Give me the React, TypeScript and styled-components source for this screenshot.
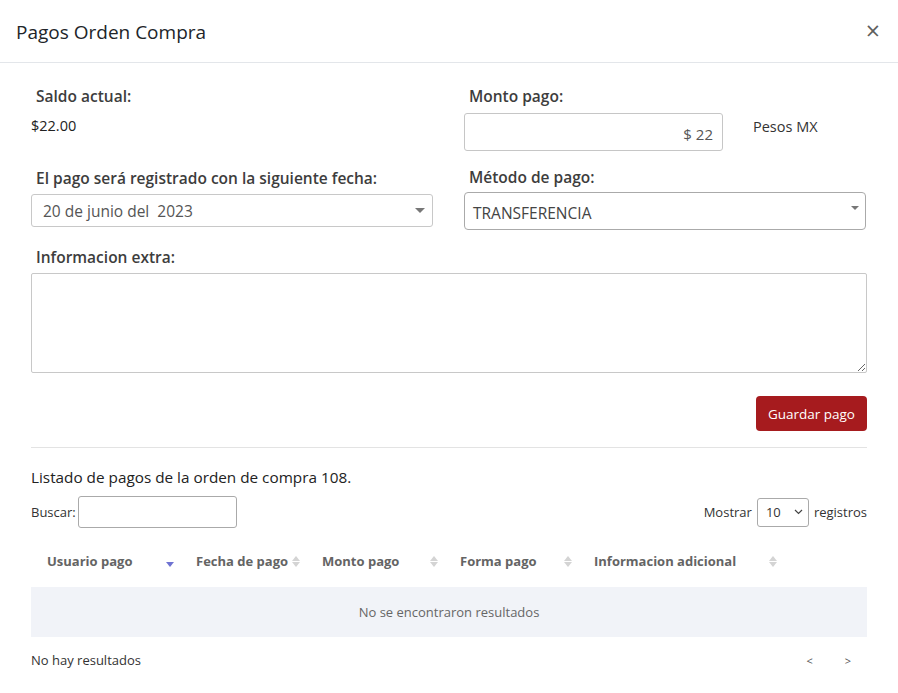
import type { FC } from "react";
import styled, { createGlobalStyle } from "styled-components";

const GlobalStyle = createGlobalStyle`
  html, body {
    margin: 0;
    padding: 0;
    background: #ffffff;
  }

  body {
    font-family: "Open Sans", "Liberation Sans", sans-serif;
    color: #212529;
  }

  * {
    box-sizing: border-box;
  }
`;

const Modal = styled.div`
  width: 898px;
  height: 693px;
  background: #fff;
  overflow: hidden;
`;

const Header = styled.div`
  height: 63px;
  display: flex;
  align-items: center;
  justify-content: space-between;
  padding: 0 16px;
  border-bottom: 1px solid #e3e6ea;
`;

const Title = styled.h5`
  margin: 0;
  font-size: 19px;
  font-weight: 400;
  color: #212529;
  padding-top: 1px;
`;

const Close = styled.span`
  font-size: 25px;
  line-height: 1;
  color: #5f5f5f;
  margin-right: 2px;
  margin-top: -1px;
`;

const Body = styled.div`
  padding: 23px 31px 0 31px;
`;

const FormGrid = styled.div`
  display: grid;
  grid-template-columns: 402px 402px;
  column-gap: 31px;
`;

const Field = styled.div`
  display: flex;
  flex-direction: column;
`;

const Label = styled.label<{ $top?: number }>`
  font-size: 15.5px;
  font-weight: 600;
  color: #3d3d3d;
  padding-left: 5px;
  margin-top: ${({ $top }) => $top ?? 0}px;
  margin-bottom: 6px;
  height: 20px;
  line-height: 20px;
  white-space: nowrap;
`;

const Value = styled.div`
  font-size: 14.5px;
  color: #222;
  margin-top: 4px;
`;

const AmountRow = styled.div`
  display: flex;
  align-items: flex-start;
  gap: 30px;
  margin-top: 1px;
`;

const AmountInput = styled.div`
  width: 259px;
  height: 38px;
  border: 1px solid #c6c6c6;
  border-radius: 3px;
  display: flex;
  align-items: center;
  justify-content: flex-end;
  padding: 3px 9px 0 0;
  font-size: 15px;
  color: #555;
`;

const Unit = styled.span`
  font-size: 14.5px;
  color: #333;
  padding-top: 4px;
`;

const DateSelect = styled.div`
  height: 33px;
  border: 1px solid #c8c8c8;
  border-radius: 3px;
  display: flex;
  align-items: center;
  justify-content: space-between;
  padding: 0 7px 0 11px;
  font-size: 15.5px;
  color: #555;
  white-space: pre;
`;

const MethodSelect = styled.div`
  height: 38px;
  border: 1px solid #aaa;
  border-radius: 4px;
  display: flex;
  align-items: flex-start;
  justify-content: space-between;
  padding: 9px 6px 0 8px;
  font-size: 15.5px;
  color: #444;
  margin-top: -1px;
`;

const Caret = styled.span<{ $size?: number }>`
  width: 0;
  height: 0;
  border-left: ${({ $size }) => $size ?? 5}px solid transparent;
  border-right: ${({ $size }) => $size ?? 5}px solid transparent;
  border-top: ${({ $size }) => $size ?? 5}px solid #777;
  margin-top: ${({ $size }) => (($size ?? 5) === 4 ? 4 : 0)}px;
`;

const ExtraArea = styled.textarea`
  display: block;
  width: 836px;
  height: 100px;
  border: 1px solid #c8c8c8;
  border-radius: 2px;
  resize: vertical;
  font-family: inherit;
  margin: 0;
`;

const Actions = styled.div`
  display: flex;
  justify-content: flex-end;
  margin-top: 23px;
  padding-bottom: 16px;
  border-bottom: 1px solid #e3e3e3;
`;

const SaveButton = styled.button`
  height: 35px;
  padding: 0 12px;
  background: #a61b1e;
  color: #fff;
  border: none;
  border-radius: 4px;
  font-family: "Open Sans", "Liberation Sans", sans-serif;
  font-size: 13.5px;
`;

const ListTitle = styled.p`
  margin: 19px 0 9px;
  font-size: 15.3px;
  color: #222;
`;

const TableTools = styled.div`
  display: flex;
  justify-content: space-between;
  align-items: center;
  font-size: 13px;
  color: #333;
`;

const Inline = styled.div<{ $gap?: number }>`
  display: flex;
  align-items: center;
  gap: ${({ $gap }) => $gap ?? 3}px;
`;

const SearchBox = styled.div`
  width: 159px;
  height: 32px;
  border: 1px solid #aaa;
  border-radius: 3px;
`;

const PageSize = styled.div`
  width: 52px;
  height: 29px;
  border: 1px solid #aaa;
  border-radius: 3px;
  display: flex;
  align-items: center;
  justify-content: space-between;
  padding: 0 5px 0 8px;
  font-size: 13px;
  margin: 0 2px;
`;

const Table = styled.div`
  margin-top: 13px;
`;

const HeadRow = styled.div`
  height: 46px;
  display: grid;
  grid-template-columns: 149px 126px 138px 134px 205px 1fr;
`;

const HeadCell = styled.div`
  display: flex;
  align-items: center;
  justify-content: space-between;
  padding: 0 6px 6px 16px;
  font-size: 13px;
  font-weight: 700;
  color: #646464;
  white-space: nowrap;
`;

const SortIcon = styled.span`
  display: inline-flex;
  flex-direction: column;
  gap: 1px;
`;

const Tri = styled.span<{ $up?: boolean; $color?: string }>`
  width: 0;
  height: 0;
  border-left: 4px solid transparent;
  border-right: 4px solid transparent;
  ${({ $up, $color }) =>
    $up
      ? `border-bottom: 5px solid ${$color ?? "#d4d4d4"};`
      : `border-top: 5px solid ${$color ?? "#d4d4d4"};`}
`;

const ActiveSort = styled(SortIcon)`
  padding-top: 6px;
`;

const EmptyRow = styled.div`
  height: 50px;
  background: #f1f3f8;
  display: flex;
  align-items: center;
  justify-content: center;
  font-size: 13px;
  color: #666;
`;

const Footer = styled.div`
  display: flex;
  justify-content: space-between;
  align-items: center;
  margin-top: 14px;
  font-size: 13px;
  color: #333;
`;

const Pager = styled.div`
  display: flex;
  gap: 32px;
  padding-right: 16px;
  font-size: 11px;
  color: #555;
`;

const columns: { title: string; active?: boolean }[] = [
  { title: "Usuario pago", active: true },
  { title: "Fecha de pago" },
  { title: "Monto pago" },
  { title: "Forma pago" },
  { title: "Informacion adicional" },
];

const App: FC = () => {
  return (
    <>
      <GlobalStyle />
      <Modal>
        <Header>
          <Title>Pagos Orden Compra</Title>
          <Close>×</Close>
        </Header>

        <Body>
          <FormGrid>
            <Field>
              <Label>Saldo actual:</Label>
              <Value>$22.00</Value>
            </Field>
            <Field>
              <Label>Monto pago:</Label>
              <AmountRow>
                <AmountInput>$ 22</AmountInput>
                <Unit>Pesos MX</Unit>
              </AmountRow>
            </Field>

            <Field>
              <Label $top={17}>El pago será registrado con la siguiente fecha:</Label>
              <DateSelect>
                20 de junio del  2023
                <Caret />
              </DateSelect>
            </Field>
            <Field>
              <Label $top={16}>Método de pago:</Label>
              <MethodSelect>
                TRANSFERENCIA
                <Caret $size={4} />
              </MethodSelect>
            </Field>
          </FormGrid>

          <Field>
            <Label $top={17}>Informacion extra:</Label>
            <ExtraArea />
          </Field>

          <Actions>
            <SaveButton>Guardar pago</SaveButton>
          </Actions>

          <ListTitle>Listado de pagos de la orden de compra 108.</ListTitle>

          <TableTools>
            <Inline $gap={2}>
              Buscar:
              <SearchBox />
            </Inline>
            <Inline>
              Mostrar
              <PageSize>
                10
                <svg width="9" height="6" viewBox="0 0 9 6">
                  <path d="M1 1l3.5 3.5L8 1" fill="none" stroke="#444" strokeWidth="1.2" />
                </svg>
              </PageSize>
              registros
            </Inline>
          </TableTools>

          <Table>
            <HeadRow>
              {columns.map((col) => (
                <HeadCell key={col.title}>
                  {col.title}
                  {col.active ? (
                    <ActiveSort>
                      <Tri $color="#6f73d2" />
                    </ActiveSort>
                  ) : (
                    <SortIcon>
                      <Tri $up />
                      <Tri />
                    </SortIcon>
                  )}
                </HeadCell>
              ))}
              <div />
            </HeadRow>
            <EmptyRow>No se encontraron resultados</EmptyRow>
          </Table>

          <Footer>
            No hay resultados
            <Pager>
              <span>&lt;</span>
              <span>&gt;</span>
            </Pager>
          </Footer>
        </Body>
      </Modal>
    </>
  );
};

export default App;
